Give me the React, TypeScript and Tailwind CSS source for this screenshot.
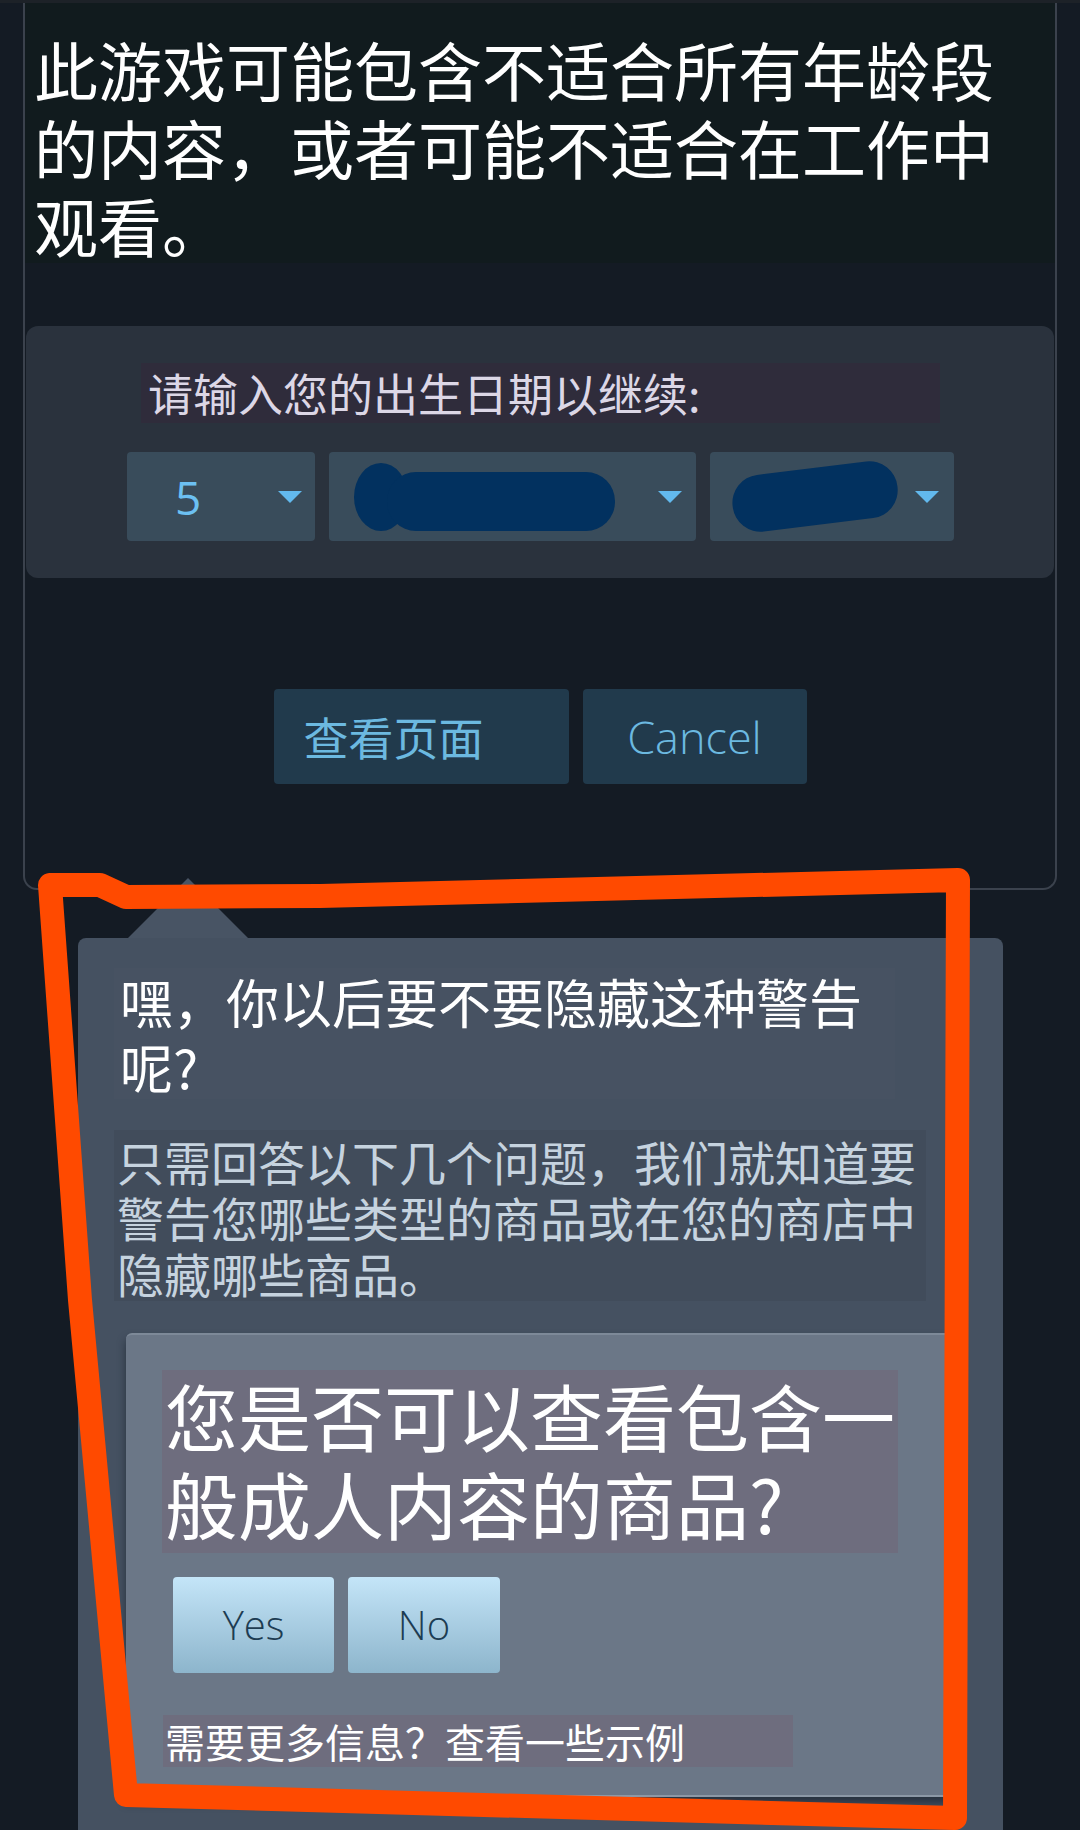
import React from "react";

const cjk = "font-['Noto_Sans_CJK_SC',sans-serif]";

function Arrow() {
  return (
    <div className="h-0 w-0 border-l-[12px] border-r-[12px] border-t-[12px] border-l-transparent border-r-transparent border-t-[#62b9ee]" />
  );
}

function DateSelects() {
  return (
    <div className="mt-[29px] ml-[101px] flex h-[89px] gap-[14px]">
      <div className="flex w-[188px] items-center justify-between rounded-[4px] bg-[#394c5b] pl-[48px] pr-[13px]">
        <span className="font-['Open_Sans',sans-serif] text-[46px] leading-none text-[#6cc0f2]">5</span>
        <Arrow />
      </div>
      <div className="relative flex w-[367px] items-center justify-end rounded-[4px] bg-[#394c5b] pr-[14px]">
        <svg className="absolute left-0 top-0" width="300" height="89" viewBox="0 0 300 89">
          <ellipse cx="52" cy="45" rx="27" ry="34" fill="#02315f" />
          <rect x="58" y="20" width="228" height="59" rx="29" fill="#02315f" />
        </svg>
        <Arrow />
      </div>
      <div className="relative flex w-[244px] items-center justify-end rounded-[4px] bg-[#394c5b] pr-[15px]">
        <svg className="absolute left-0 top-0" width="200" height="89" viewBox="0 0 200 89">
          <rect x="22" y="16" width="166" height="57" rx="28" fill="#02315f" transform="rotate(-7 105 44)" />
        </svg>
        <Arrow />
      </div>
    </div>
  );
}

function Annotation() {
  return (
    <svg
      className="pointer-events-none absolute left-0 top-0"
      width="1080"
      height="1830"
      viewBox="0 0 1080 1830"
    >
      <path
        d="M 126 897 L 320 896 L 958 880 L 955 1818 L 126 1795 L 80 1300 L 50 885 L 100 885 L 126 897"
        fill="none"
        stroke="#ff4a00"
        strokeWidth="24"
        strokeLinejoin="round"
        strokeLinecap="round"
      />
    </svg>
  );
}

export default function App() {
  return (
    <div className={`relative h-[1830px] w-[1080px] overflow-hidden bg-[#141b24] ${cjk}`}>
      <div className="h-[3px] bg-[#1d2228]" />

      {/* age gate panel */}
      <div className="ml-[23px] h-[887px] w-[1034px] rounded-b-[14px] border-x-2 border-b-2 border-[#3b424d]">
        <div className="h-[260px] bg-[#111b1e] pl-[9px] pt-[26px]">
          <p className="text-[64px] leading-[78px] text-white">
            此游戏可能包含不适合所有年龄段的内容，或者可能不适合在工作中观看。
          </p>
        </div>

        <div className="mx-[1px] mt-[63px] h-[252px] rounded-[12px] bg-[#2a323d] pt-[37px]">
          <div className="ml-[115px] h-[60px] w-[799px] bg-[#2f2c3b] pl-[7px] text-[45px] leading-[60px] text-[#dcd7e6]">
            请输入您的出生日期以继续:
          </div>
          <DateSelects />
        </div>

        <div className="mt-[111px] flex justify-center gap-[14px]">
          <button className="flex h-[95px] w-[295px] items-center rounded-[4px] bg-[#213a4c] pl-[30px] text-[45px] text-[#6cb9e0]">
            查看页面
          </button>
          <button className="flex h-[95px] w-[224px] items-center justify-center rounded-[4px] bg-[#213a4c] font-['Open_Sans',sans-serif] text-[45px] font-light text-[#6cb9e0]">
            Cancel
          </button>
        </div>
      </div>

      {/* content preferences popup */}
      <div className="relative ml-[78px] mt-[48px] w-[925px] rounded-[8px] bg-[#455161] pb-[80px] pl-[36px] pt-[30px]">
        <div className="absolute left-[50px] top-[-60px] h-0 w-0 border-b-[60px] border-l-[60px] border-r-[60px] border-b-[#485464] border-l-transparent border-r-transparent" />

        <div className="w-[781px] bg-[#475262] px-[6px] pt-[1px] text-[53px] leading-[65px] text-white">
          嘿，你以后要不要隐藏这种警告呢?
        </div>

        <div className="mt-[31px] w-[812px] bg-[#414c5b] pl-[3px] pt-[3px] text-[47px] leading-[56px] text-[#c6d3df]">
          只需回答以下几个问题，我们就知道要警告您哪些类型的商品或在您的商店中隐藏哪些商品。
        </div>

        <div className="ml-[12px] mt-[32px] w-[829px] rounded-t-[6px] border-t-2 border-b-2 border-t-[#7d8998] border-b-[#8c98a6] bg-[#6b7787] pb-[28px] pl-[36px] pt-[35px] shadow-[0_6px_8px_rgba(20,28,40,0.6)]">
          <div className="w-[736px] bg-[#6e6d7e] pb-[7px] pl-[3px] text-[73px] leading-[88px] text-white">
            您是否可以查看包含一般成人内容的商品?
          </div>

          <div className="ml-[11px] mt-[24px] flex gap-[14px]">
            <button className="flex h-[96px] w-[161px] items-center justify-center rounded-[4px] bg-gradient-to-b from-[#c4e5f8] to-[#8db5cc] font-['Open_Sans',sans-serif] text-[40px] font-light text-[#1d3c52]">
              Yes
            </button>
            <button className="flex h-[96px] w-[152px] items-center justify-center rounded-[4px] bg-gradient-to-b from-[#c4e5f8] to-[#8db5cc] font-['Open_Sans',sans-serif] text-[40px] font-light text-[#1d3c52]">
              No
            </button>
          </div>

          <div className="ml-[1px] mt-[42px] h-[52px] w-[630px] bg-[#6e6d7e] pl-[2px] text-[40px] leading-[52px] text-white">
            需要更多信息？查看一些示例
          </div>
        </div>
      </div>

      <Annotation />
    </div>
  );
}
